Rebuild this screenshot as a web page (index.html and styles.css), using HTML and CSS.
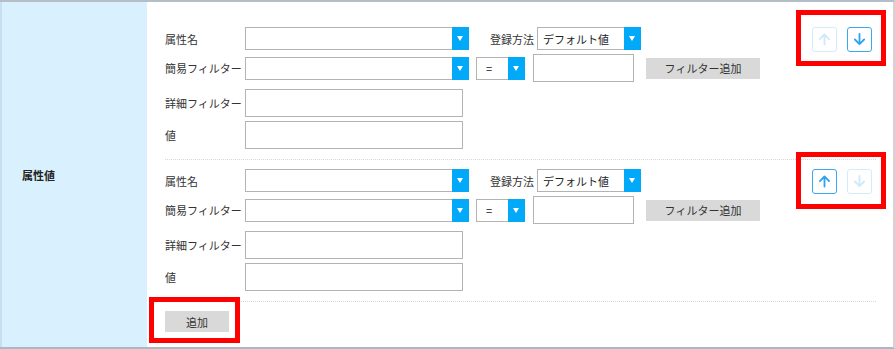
FILE: index.html
```html
<!DOCTYPE html>
<html lang="ja">
<head>
<meta charset="utf-8">
<link rel="stylesheet" href="styles.css">
</head>
<body>
<div class="page">
  <div class="table">
    <div class="head-cell">属性値</div>
    <div class="main-cell">
      <div class="section">
        <div class="fields">
          <div class="row r1">
            <span class="label">属性名</span>
            <div class="select wide"><span class="caret"></span></div>
            <span class="label2">登録方法</span>
            <div class="select method"><span class="val">デフォルト値</span><span class="caret"></span></div>
          </div>
          <div class="row r2">
            <span class="label">簡易フィルター</span>
            <div class="select wide"><span class="caret"></span></div>
            <div class="select eq"><span class="val">=</span><span class="caret"></span></div>
            <div class="input small"></div>
            <button class="btn filter">フィルター追加</button>
          </div>
          <div class="row r3">
            <span class="label">詳細フィルター</span>
            <div class="input long"></div>
          </div>
          <div class="row r4">
            <span class="label">値</span>
            <div class="input long"></div>
          </div>
        </div>
        <div class="moves">
          <button class="move disabled"><svg viewBox="0 0 25 25" width="23" height="23"><path d="M12.5 18V7M7.5 12l5-5 5 5" /></svg></button>
          <button class="move"><svg viewBox="0 0 25 25" width="23" height="23"><path d="M12.5 6.5v11M7.5 12.5l5 5 5-5" /></svg></button>
        </div>
      </div>
      <div class="section">
        <div class="fields">
          <div class="row r1">
            <span class="label">属性名</span>
            <div class="select wide"><span class="caret"></span></div>
            <span class="label2">登録方法</span>
            <div class="select method"><span class="val">デフォルト値</span><span class="caret"></span></div>
          </div>
          <div class="row r2">
            <span class="label">簡易フィルター</span>
            <div class="select wide"><span class="caret"></span></div>
            <div class="select eq"><span class="val">=</span><span class="caret"></span></div>
            <div class="input small"></div>
            <button class="btn filter">フィルター追加</button>
          </div>
          <div class="row r3">
            <span class="label">詳細フィルター</span>
            <div class="input long"></div>
          </div>
          <div class="row r4">
            <span class="label">値</span>
            <div class="input long"></div>
          </div>
        </div>
        <div class="moves">
          <button class="move"><svg viewBox="0 0 25 25" width="23" height="23"><path d="M12.5 18V7M7.5 12l5-5 5 5" /></svg></button>
          <button class="move disabled"><svg viewBox="0 0 25 25" width="23" height="23"><path d="M12.5 6.5v11M7.5 12.5l5 5 5-5" /></svg></button>
        </div>
      </div>
      <div class="add-area">
        <button class="btn add">追加</button>
      </div>
    </div>
  </div>
  <div class="mark mark1"></div>
  <div class="mark mark2"></div>
  <div class="mark mark3"></div>
</div>
</body>
</html>
```

FILE: styles.css
```css
* { box-sizing: border-box; }
html, body { margin: 0; padding: 0; background: #fff; }
body {
  font-family: "Noto Sans CJK JP", "Noto Sans", sans-serif;
  font-size: 11px;
  color: #333;
}
.page {
  position: relative;
  width: 895px;
  height: 349px;
}
.table {
  display: grid;
  grid-template-columns: 147px 1fr;
  width: 895px;
  height: 349px;
  border-top: 2px solid #b3bec6;
  border-bottom: 2px solid #a9b8c2;
  border-right: 2px solid #d3d3d3;
}
.head-cell {
  background: #d9f0fe;
  border-left: 2px solid #c4e0f2;
  display: flex;
  align-items: center;
  padding-left: 20px;
  font-weight: bold;
  color: #222;
}
.main-cell {
  padding: 16px 17px 0 18px;
}
.section {
  display: flex;
  justify-content: space-between;
  align-items: flex-start;
  padding: 9px 0 10px;
  border-bottom: 1px dotted #d6d6d6;
}
.fields { display: flex; flex-direction: column; }
.row { display: flex; align-items: center; }
.r1 { height: 23px; }
.r2 { height: 28px; margin-top: 4px; }
.r3 { height: 28px; margin-top: 7px; }
.r4 { height: 28px; margin-top: 4px; }
.label { width: 80px; color: #333; white-space: nowrap; }
.label2 { margin-left: 21px; width: 47px; white-space: nowrap; }
.select {
  position: relative;
  height: 23px;
  border: 1px solid #b3b3b3;
  background: #fff;
  display: flex;
  align-items: center;
}
.select.wide { width: 224px; }
.select.method { width: 104px; }
.select.eq { width: 49px; margin-left: 7px; }
.val { padding-left: 5px; color: #222; }
.select.eq .val { padding-left: 9px; }
.caret {
  position: absolute;
  right: -1px;
  top: -1px;
  bottom: -1px;
  width: 17px;
  background: #03a9f9;
}
.caret::after {
  content: "";
  position: absolute;
  left: 5px;
  top: 9px;
  border-left: 3.5px solid transparent;
  border-right: 3.5px solid transparent;
  border-top: 5px solid #fff;
}
.input {
  height: 28px;
  border: 1px solid #b3b3b3;
  background: #fff;
}
.input.long { width: 218px; }
.input.small { width: 101px; margin-left: 8px; }
.btn {
  font-family: inherit;
  font-size: 11px;
  color: #333;
  background: #d9d9d9;
  border: none;
  padding: 0;
  height: 21px;
}
.btn.filter { width: 114px; margin-left: 12px; }
.moves {
  display: flex;
  gap: 10px;
  margin-right: 4px;
}
.move {
  width: 25px;
  height: 25px;
  padding: 0;
  border: 1px solid #3aa8ef;
  border-radius: 3px;
  background: #fff;
  display: flex;
  align-items: center;
  justify-content: center;
}
.move svg path {
  fill: none;
  stroke: #2ea3ee;
  stroke-width: 2;
  stroke-linecap: round;
  stroke-linejoin: round;
}
.move.disabled { border-color: #d2ecfb; }
.move.disabled svg path { stroke: #cde9fa; }
.add-area { padding-top: 9px; }
.btn.add { width: 64px; }
.mark {
  position: absolute;
  border: 5px solid #ff0000;
}
.mark1 { left: 796px; top: 10px; width: 90px; height: 56px; }
.mark2 { left: 796px; top: 152px; width: 90px; height: 57px; }
.mark3 { left: 149px; top: 297px; width: 91px; height: 46px; }
```
